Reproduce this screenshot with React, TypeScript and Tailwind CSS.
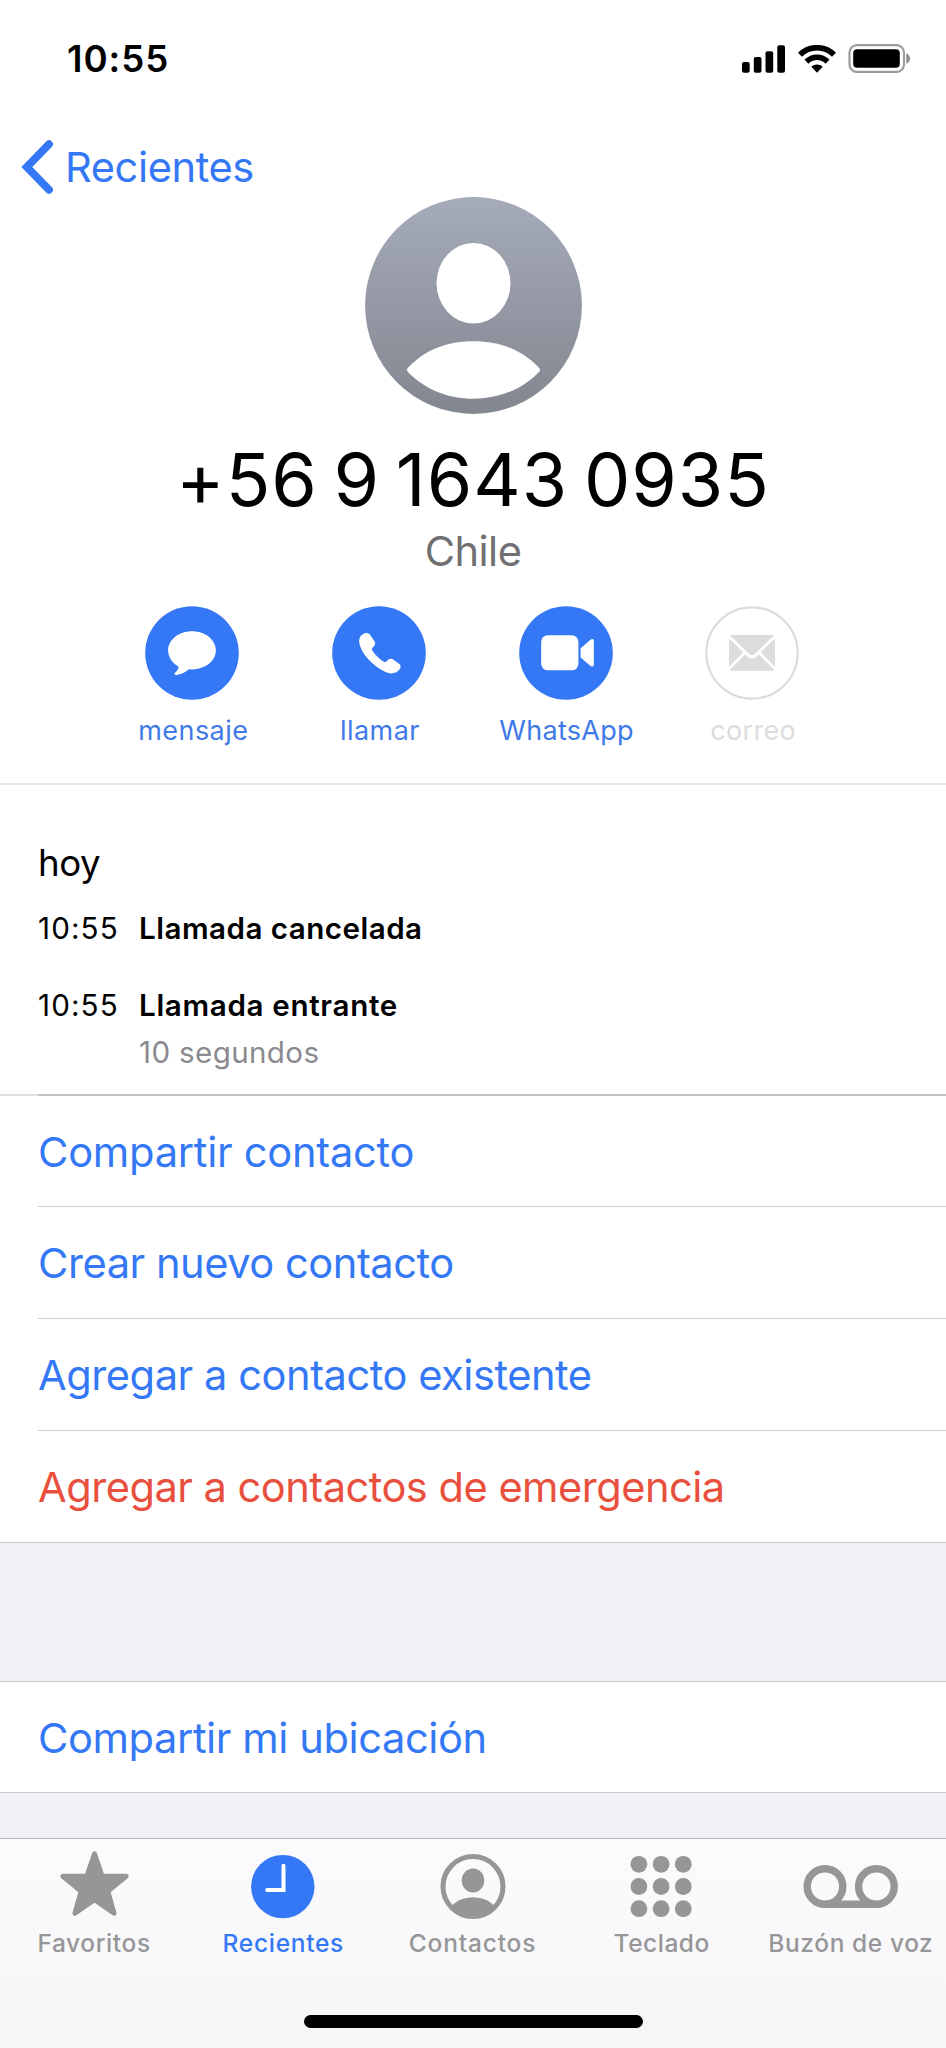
import type { ReactNode } from "react";
import clsx from "clsx";

interface Action {
    label: string;
    tracking: string;
    icon: ReactNode;
    disabled?: boolean;
}

interface Tab {
    label: string;
    tracking: string;
    icon: ReactNode;
    active?: boolean;
}

const actions: Action[] = [
    {
        label: "mensaje",
        tracking: "tracking-[0.45px]",
        icon: (
            <path
                d="M47 25.2c13.2 0 23.9 8.5 23.9 19.1S60.2 63.4 47 63.4c-1 0-2 0-2.9-.1-3.3 2.8-8.2 5.4-12.8 5.700-1.900.1-2.300-1.300-1.100-2.400 1.800-1.500 3.200-3.600 3.500-5.800C27.300 57.400 23.100 51.200 23.100 44.300c0-10.600 10.700-19.100 23.900-19.100z"
                fill="#fff"
            />
        ),
    },
    {
        label: "llamar",
        tracking: "tracking-[0.45px]",
        icon: (
            <path
                d="M30.9 28.3c2.3-1.7 5.3-2 7.2.5l4.2 6.1c1.2 1.8 1.1 3.4-.2 5l-1.7 1.9c-.7.9-.6 1.8-.1 2.7 1.3 2.1 3.2 4.3 5.4 6.5 2.2 2.1 4.1 3.7 6.1 4.7.9.5 1.800.5 2.600-.2l1.600-1.500c1.600-1.500 3.300-1.600 5.200-.4l5.600 3.900c2.200 1.600 2.500 3.800.6 6.100-3.300 4-8.400 5-13.900 2.500-6.300-2.800-12.400-7.700-17.200-12.800-4.200-4.500-7.700-10.300-8.900-15.800-.9-4.100.3-7.400 3.500-9.200z"
                fill="#fff"
            />
        ),
    },
    {
        label: "WhatsApp",
        tracking: "tracking-[0.27px]",
        icon: (
            <>
                <rect x="22.2" y="29.3" width="37.2" height="35" rx="6.5" fill="#fff" />
                <path d="M61.600 42.200l9.700-8.300c1.800-1.500 3.600-.8 3.600 1.300v23.200c0 2.100-1.800 2.800-3.600 1.300L61.600 51.400z" fill="#fff" />
            </>
        ),
    },
    {
        label: "correo",
        tracking: "tracking-[0.35px]",
        disabled: true,
        icon: (
            <>
                <path d="M26 29h42c.6 0 .9.5.5.9L49.8 48c-1.7 1.6-3.9 1.6-5.6 0L25.500 29.900c-.4-.4-.1-.9.500-.9z" fill="#dcdcde" />
                <path d="M24 32.300L38.300 46.300 24 60.700zM70 32.300L55.700 46.300 70 60.700z" fill="#dcdcde" />
                <path d="M40.200 48.200l2.400 2.300c2.600 2.500 6.200 2.500 8.800 0l2.400-2.300 15.100 15.200c.6.600.3 1.400-.6 1.400H25.700c-.9 0-1.200-.8-.6-1.400z" fill="#dcdcde" />
            </>
        ),
    },
];

const rows = [
    { label: "Compartir contacto", tracking: "tracking-[-0.25px]", color: "text-[#3478f6]", height: "h-[111px]" },
    { label: "Crear nuevo contacto", tracking: "tracking-[-0.46px]", color: "text-[#3478f6]", height: "h-[112px]" },
    { label: "Agregar a contacto existente", tracking: "tracking-[-0.45px]", color: "text-[#3478f6]", height: "h-[112px]" },
    { label: "Agregar a contactos de emergencia", tracking: "tracking-[-0.51px]", color: "text-[#e94f3d]", height: "h-[112px]" },
];

const dotX = [9.9, 32.1, 54.3];
const dotY = [10.3, 32.5, 54.7];

const tabs: Tab[] = [
    {
        label: "Favoritos",
        tracking: "tracking-[0.6px]",
        icon: (
            <svg className="overflow-visible" width="72" height="66" viewBox="0 0 72 66">
                <path
                    d="M35.5 -0.2L43.100 22.300H67.100L48.800 37.200L55 59.300L35.500 45.700L16 59.300L22.200 37.200L3.900 22.300H27.900Z"
                    fill="#969698"
                    stroke="#969698"
                    strokeWidth="5"
                    strokeLinejoin="round"
                />
            </svg>
        ),
    },
    {
        label: "Recientes",
        tracking: "tracking-[0.7px]",
        active: true,
        icon: (
            <svg width="66" height="66" viewBox="0 0 66 66">
                <circle cx="31.8" cy="32.6" r="31.7" fill="#3478f6" />
                <path d="M32.500 11.700V36H16.200" fill="none" stroke="#fff" strokeWidth="4" strokeLinecap="round" strokeLinejoin="miter" />
            </svg>
        ),
    },
    {
        label: "Contactos",
        tracking: "tracking-[0.8px]",
        icon: (
            <svg width="66" height="66" viewBox="0 0 66 66">
                <clipPath id="contact-ring">
                    <circle cx="33" cy="32.6" r="30" />
                </clipPath>
                <circle cx="33" cy="32.6" r="30" fill="none" stroke="#969698" strokeWidth="5" />
                <ellipse cx="33" cy="26.600" rx="11.300" ry="12" fill="#969698" />
                <ellipse cx="33" cy="63.500" rx="26" ry="20.200" fill="#969698" clipPath="url(#contact-ring)" />
            </svg>
        ),
    },
    {
        label: "Teclado",
        tracking: "tracking-[0.53px]",
        icon: (
            <svg width="66" height="66" viewBox="0 0 66 66">
                {dotY.map((cy) => dotX.map((cx) => <circle key={`${cx}-${cy}`} cx={cx} cy={cy} r="8.4" fill="#969698" />))}
            </svg>
        ),
    },
    {
        label: "Buzón de voz",
        tracking: "tracking-[0.59px]",
        icon: (
            <svg width="96" height="66" viewBox="0 0 96 66" fill="none" stroke="#969698" strokeWidth="7.4">
                <circle cx="22" cy="32.5" r="17.8" />
                <circle cx="73.4" cy="32.5" r="17.8" />
                <path d="M22 50.3H73.4" />
            </svg>
        ),
    },
];

function StatusBar() {
    return (
        <div className="flex h-[117px] items-center justify-between pl-[67px] pr-[35px]">
            <span className="pt-px text-[36.7px] font-semibold leading-none tracking-[0.95px]">10:55</span>
            <div className="flex items-center">
                <svg width="44" height="28" viewBox="0 0 44 28">
                    <rect x="0" y="17" width="7.7" height="10.7" rx="2" />
                    <rect x="11.8" y="12" width="7.7" height="15.7" rx="2" />
                    <rect x="23.5" y="6.3" width="7.7" height="21.4" rx="2" />
                    <rect x="35.3" y="0.2" width="7.7" height="27.5" rx="2" />
                </svg>
                <svg className="ml-[12px]" width="38" height="28" viewBox="0 0 38 28" fill="none" stroke="#000" strokeWidth="5.7">
                    <path d="M2 9.700C11.500.4 26.500.4 36 9.700" />
                    <path d="M8.400 16.600C14.600 10.800 23.400 10.800 29.600 16.600" />
                    <path d="M19 27.800L13.300 21.700C16.500 18.700 21.500 18.700 24.700 21.700Z" fill="#000" stroke="none" />
                </svg>
                <svg className="ml-[12px]" width="63" height="29" viewBox="0 0 63 29">
                    <rect x="1.5" y="1.1" width="54.5" height="26.8" rx="7.5" fill="none" stroke="#9c9c9c" strokeWidth="2.2" />
                    <rect x="5.2" y="5.2" width="46.6" height="18.6" rx="4" />
                    <path d="M58.300 9.300C60.400 10 62 12.100 62 14.500S60.400 19 58.300 19.700Z" fill="#8c8c8c" />
                </svg>
            </div>
        </div>
    );
}

function Avatar() {
    return (
        <svg width="217" height="217" viewBox="0 0 217 217">
            <defs>
                <linearGradient id="avatar" x1="0" y1="0" x2="0" y2="1">
                    <stop offset="0" stopColor="#a6abba" />
                    <stop offset="1" stopColor="#82868f" />
                </linearGradient>
            </defs>
            <circle cx="108.5" cy="108.5" r="108.4" fill="url(#avatar)" />
            <ellipse cx="108.5" cy="86.2" rx="37" ry="40.3" fill="#fff" />
            <path
                d="M43 170.8C58.5 154 80 144.2 108.5 144.2S158.5 154 174 170.8C175.4 172.3 175.3 173.4 174 174.9C157 192.5 133.5 201.7 108.5 201.7S60 192.5 43 174.9C41.7 173.4 41.6 172.3 43 170.8Z"
                fill="#fff"
            />
        </svg>
    );
}

function ContactHeader() {
    return (
        <header className="border-b-2 border-[#e6e6e6] pb-[36px]">
            <nav className="flex h-[80px] items-center pl-[21px] pt-[20px] text-[#3478f6]">
                <svg width="32" height="54" viewBox="0 0 32 54" fill="none">
                    <path d="M28 4.2L5.800 27L28 49.800" stroke="#3478f6" strokeWidth="7.8" strokeLinecap="round" strokeLinejoin="miter" />
                </svg>
                <span className="ml-[12px] pt-px text-[41.6px] leading-none tracking-[-0.4px]">Recientes</span>
            </nav>
            <div className="flex flex-col items-center">
                <Avatar />
                <h1 className="mt-[27px] text-[73.5px] leading-[77px] tracking-[1px] [word-spacing:-6px]">+56 9 1643 0935</h1>
                <p className="mt-2 text-[41.6px] leading-[50px] tracking-[-0.53px] text-[#707072]">Chile</p>
            </div>
            <div className="ml-[99px] mt-[30px] grid w-[746.5px] grid-cols-4">
                {actions.map((action) => (
                    <div key={action.label} className="flex flex-col items-center">
                        <svg width="94" height="94" viewBox="0 0 94 94">
                            {action.disabled ? (
                                <circle cx="47" cy="47" r="45.7" fill="#fff" stroke="#dcdcde" strokeWidth="2.2" />
                            ) : (
                                <circle cx="47" cy="47" r="46.8" fill="#3478f6" />
                            )}
                            {action.icon}
                        </svg>
                        <span
                            className={clsx(
                                "ml-[2px] mt-[14px] text-[27px] leading-[33px]",
                                action.tracking,
                                action.disabled ? "text-[#dcdcde]" : "text-[#3f7ae8]"
                            )}
                        >
                            {action.label}
                        </span>
                    </div>
                ))}
            </div>
        </header>
    );
}

function CallHistory() {
    return (
        <section className="pl-[38px] pt-[58px] text-[29.6px] leading-10">
            <h2 className="text-[36.7px] leading-10 tracking-[-0.49px]">hoy</h2>
            <div className="mt-[25px] flex">
                <span className="w-[101px] tracking-[1.12px]">10:55</span>
                <span className="font-semibold tracking-[0.47px]">Llamada cancelada</span>
            </div>
            <div className="mt-[37px] flex">
                <span className="w-[101px] tracking-[1.12px]">10:55</span>
                <div>
                    <p className="font-semibold tracking-[0.66px]">Llamada entrante</p>
                    <p className="mt-[7px] tracking-[0.35px] text-[#8a8a8e]">10 segundos</p>
                </div>
            </div>
        </section>
    );
}

function TabBar() {
    return (
        <footer className="flex h-[210px] flex-col items-center border-t border-[#b9b9bc] bg-linear-to-b from-[#fbfbfd] to-[#f6f6f8]">
            <div className="grid w-full grid-cols-5 pt-[15px]">
                {tabs.map((tab) => (
                    <div key={tab.label} className="flex flex-col items-center whitespace-nowrap">
                        {tab.icon}
                        <span
                            className={clsx(
                                "mr-[1px] mt-[7px] text-[24.5px] font-medium leading-[32px]",
                                tab.tracking,
                                tab.active ? "text-[#3478f6]" : "text-[#969698]"
                            )}
                        >
                            {tab.label}
                        </span>
                    </div>
                ))}
            </div>
            <div className="mt-[56px] h-[13px] w-[339px] shrink-0 rounded-full bg-black" />
        </footer>
    );
}

export default function App() {
    return (
        <div className="flex h-[2048px] w-[946px] flex-col overflow-hidden bg-[#f0f0f5] font-['Inter',sans-serif] text-black">
            <div className="bg-white">
                <StatusBar />
                <ContactHeader />
                <CallHistory />
                <div className="mt-[22px] flex h-[2px]">
                    <div className="w-[38px] bg-[#e0e0e1]" />
                    <div className="flex-1 bg-[#c2c2c4]" />
                </div>
                <ul>
                    {rows.map((row, i) => (
                        <li key={row.label} className={clsx(row.height, i === rows.length - 1 ? "border-b border-[#c8c8cb]" : "pl-[38px]")}>
                            <div
                                className={clsx(
                                    "flex h-full items-center pt-[3px] text-[41.6px] leading-none",
                                    row.tracking,
                                    row.color,
                                    i === rows.length - 1 ? "pl-[38px]" : "border-b border-[#cbcbcd]"
                                )}
                            >
                                {row.label}
                            </div>
                        </li>
                    ))}
                </ul>
            </div>
            <div className="mt-[138px] flex h-[112px] items-center border-y border-[#c8c8cb] bg-white pl-[38px] pt-[3px] text-[41.6px] leading-none tracking-[-0.4px] text-[#3478f6]">
                Compartir mi ubicación
            </div>
            <div className="flex-1" />
            <TabBar />
        </div>
    );
}
